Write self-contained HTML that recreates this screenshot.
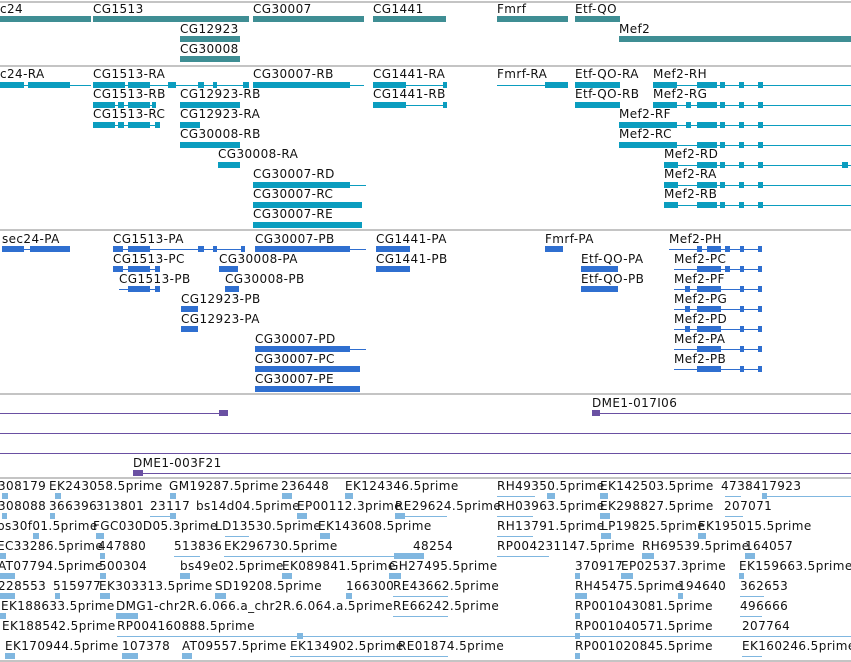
<!DOCTYPE html>
<html><head><meta charset="utf-8"><style>
body{margin:0;width:851px;height:662px;background:#fff;position:relative;overflow:hidden}
.t{position:absolute;font:12px "DejaVu Sans","Liberation Sans",sans-serif;letter-spacing:0.4px;white-space:nowrap;color:#111;line-height:14px}
.b{position:absolute;height:6px}
.l{position:absolute;height:1px}
.s{position:absolute;left:0;width:851px;height:2px;background:#c4c4c4}
.g{background:#3f8e94}
.r{background:#0b9dbf}
.p{background:#2f6fd0}
.d{background:#6a50a2}
.e{background:#80b7e0}
</style></head><body>
<div class="s" style="top:1px"></div>
<div class="s" style="top:65px"></div>
<div class="s" style="top:229px"></div>
<div class="s" style="top:393px"></div>
<div class="s" style="top:477px"></div>
<div class="s" style="top:660px"></div>

<!-- genes -->
<div class="t" style="left:0;top:2px">c24</div>
<div class="t" style="left:93px;top:2px">CG1513</div>
<div class="t" style="left:253px;top:2px">CG30007</div>
<div class="t" style="left:373px;top:2px">CG1441</div>
<div class="t" style="left:497px;top:2px">Fmrf</div>
<div class="t" style="left:575px;top:2px">Etf-QO</div>
<div class="b g" style="left:0;top:16px;width:91px"></div>
<div class="b g" style="left:93px;top:16px;width:156px"></div>
<div class="b g" style="left:253px;top:16px;width:111px"></div>
<div class="b g" style="left:373px;top:16px;width:73px"></div>
<div class="b g" style="left:497px;top:16px;width:71px"></div>
<div class="b g" style="left:575px;top:16px;width:45px"></div>
<div class="t" style="left:180px;top:22px">CG12923</div>
<div class="t" style="left:619px;top:22px">Mef2</div>
<div class="b g" style="left:180px;top:36px;width:60px"></div>
<div class="b g" style="left:619px;top:36px;width:232px"></div>
<div class="t" style="left:180px;top:42px">CG30008</div>
<div class="b g" style="left:180px;top:56px;width:60px"></div>

<!-- transcripts -->
<div class="t" style="left:0;top:67px">c24-RA</div>
<div class="t" style="left:93px;top:67px">CG1513-RA</div>
<div class="t" style="left:253px;top:67px">CG30007-RB</div>
<div class="t" style="left:373px;top:67px">CG1441-RA</div>
<div class="t" style="left:497px;top:67px">Fmrf-RA</div>
<div class="t" style="left:575px;top:67px">Etf-QO-RA</div>
<div class="t" style="left:653px;top:67px">Mef2-RH</div>
<div class="l r" style="left:0;top:85px;width:91px"></div>
<div class="b r" style="left:0;top:82px;width:24px"></div><div class="b r" style="left:28px;top:82px;width:42px"></div>
<div class="l r" style="left:93px;top:85px;width:156px"></div>
<div class="b r" style="left:93px;top:82px;width:32px"></div><div class="b r" style="left:128px;top:82px;width:22px"></div><div class="b r" style="left:168px;top:82px;width:8px"></div><div class="b r" style="left:198px;top:82px;width:6px"></div><div class="b r" style="left:213px;top:82px;width:4px"></div><div class="b r" style="left:243px;top:82px;width:6px"></div>
<div class="l r" style="left:253px;top:85px;width:111px"></div><div class="b r" style="left:253px;top:82px;width:97px"></div>
<div class="l r" style="left:373px;top:85px;width:74px"></div><div class="b r" style="left:373px;top:82px;width:33px"></div><div class="b r" style="left:443px;top:82px;width:4px"></div>
<div class="l r" style="left:497px;top:85px;width:48px"></div><div class="b r" style="left:545px;top:82px;width:23px"></div>
<div class="b r" style="left:575px;top:82px;width:45px"></div>
<div class="l r" style="left:653px;top:85px;width:198px"></div><div class="b r" style="left:653px;top:82px;width:24px"></div><div class="b r" style="left:697px;top:82px;width:20px"></div><div class="b r" style="left:720px;top:82px;width:5px"></div><div class="b r" style="left:739px;top:82px;width:5px"></div><div class="b r" style="left:758px;top:82px;width:5px"></div>

<div class="t" style="left:93px;top:87px">CG1513-RB</div>
<div class="t" style="left:180px;top:87px">CG12923-RB</div>
<div class="t" style="left:373px;top:87px">CG1441-RB</div>
<div class="t" style="left:575px;top:87px">Etf-QO-RB</div>
<div class="t" style="left:653px;top:87px">Mef2-RG</div>
<div class="l r" style="left:93px;top:105px;width:62px"></div><div class="b r" style="left:93px;top:102px;width:22px"></div><div class="b r" style="left:118px;top:102px;width:6px"></div><div class="b r" style="left:128px;top:102px;width:22px"></div><div class="b r" style="left:152px;top:102px;width:4px"></div>
<div class="b r" style="left:180px;top:102px;width:60px"></div>
<div class="l r" style="left:373px;top:105px;width:74px"></div><div class="b r" style="left:373px;top:102px;width:33px"></div><div class="b r" style="left:443px;top:102px;width:4px"></div>
<div class="b r" style="left:575px;top:102px;width:45px"></div>
<div class="l r" style="left:653px;top:105px;width:198px"></div><div class="b r" style="left:653px;top:102px;width:24px"></div><div class="b r" style="left:686px;top:102px;width:5px"></div><div class="b r" style="left:697px;top:102px;width:20px"></div><div class="b r" style="left:720px;top:102px;width:5px"></div><div class="b r" style="left:739px;top:102px;width:5px"></div><div class="b r" style="left:758px;top:102px;width:5px"></div>

<div class="t" style="left:93px;top:107px">CG1513-RC</div>
<div class="t" style="left:180px;top:107px">CG12923-RA</div>
<div class="t" style="left:619px;top:107px">Mef2-RF</div>
<div class="l r" style="left:93px;top:125px;width:67px"></div><div class="b r" style="left:93px;top:122px;width:22px"></div><div class="b r" style="left:118px;top:122px;width:6px"></div><div class="b r" style="left:128px;top:122px;width:22px"></div><div class="b r" style="left:155px;top:122px;width:5px"></div>
<div class="b r" style="left:180px;top:122px;width:20px"></div>
<div class="l r" style="left:619px;top:125px;width:232px"></div><div class="b r" style="left:619px;top:122px;width:58px"></div><div class="b r" style="left:686px;top:122px;width:5px"></div><div class="b r" style="left:697px;top:122px;width:20px"></div><div class="b r" style="left:720px;top:122px;width:5px"></div><div class="b r" style="left:739px;top:122px;width:5px"></div><div class="b r" style="left:758px;top:122px;width:5px"></div>

<div class="t" style="left:180px;top:127px">CG30008-RB</div>
<div class="t" style="left:619px;top:127px">Mef2-RC</div>
<div class="b r" style="left:180px;top:142px;width:60px"></div>
<div class="l r" style="left:619px;top:145px;width:232px"></div><div class="b r" style="left:619px;top:142px;width:58px"></div><div class="b r" style="left:697px;top:142px;width:20px"></div><div class="b r" style="left:720px;top:142px;width:5px"></div><div class="b r" style="left:739px;top:142px;width:5px"></div><div class="b r" style="left:758px;top:142px;width:5px"></div>

<div class="t" style="left:218px;top:147px">CG30008-RA</div>
<div class="t" style="left:664px;top:147px">Mef2-RD</div>
<div class="b r" style="left:218px;top:162px;width:22px"></div>
<div class="l r" style="left:664px;top:165px;width:187px"></div><div class="b r" style="left:664px;top:162px;width:14px"></div><div class="b r" style="left:697px;top:162px;width:20px"></div><div class="b r" style="left:720px;top:162px;width:5px"></div><div class="b r" style="left:739px;top:162px;width:5px"></div><div class="b r" style="left:758px;top:162px;width:5px"></div><div class="b r" style="left:842px;top:162px;width:6px"></div>

<div class="t" style="left:253px;top:167px">CG30007-RD</div>
<div class="t" style="left:664px;top:167px">Mef2-RA</div>
<div class="l r" style="left:253px;top:185px;width:113px"></div><div class="b r" style="left:253px;top:182px;width:97px"></div>
<div class="l r" style="left:664px;top:185px;width:187px"></div><div class="b r" style="left:664px;top:182px;width:14px"></div><div class="b r" style="left:697px;top:182px;width:20px"></div><div class="b r" style="left:720px;top:182px;width:5px"></div><div class="b r" style="left:739px;top:182px;width:5px"></div><div class="b r" style="left:758px;top:182px;width:5px"></div>

<div class="t" style="left:253px;top:187px">CG30007-RC</div>
<div class="t" style="left:664px;top:187px">Mef2-RB</div>
<div class="b r" style="left:253px;top:202px;width:109px"></div>
<div class="l r" style="left:664px;top:205px;width:187px"></div><div class="b r" style="left:664px;top:202px;width:14px"></div><div class="b r" style="left:697px;top:202px;width:20px"></div><div class="b r" style="left:720px;top:202px;width:5px"></div><div class="b r" style="left:739px;top:202px;width:5px"></div><div class="b r" style="left:758px;top:202px;width:5px"></div>

<div class="t" style="left:253px;top:207px">CG30007-RE</div>
<div class="b r" style="left:253px;top:222px;width:109px"></div>

<!-- proteins -->
<div class="t" style="left:2px;top:232px">sec24-PA</div>
<div class="t" style="left:113px;top:232px">CG1513-PA</div>
<div class="t" style="left:255px;top:232px">CG30007-PB</div>
<div class="t" style="left:376px;top:232px">CG1441-PA</div>
<div class="t" style="left:545px;top:232px">Fmrf-PA</div>
<div class="t" style="left:669px;top:232px">Mef2-PH</div>
<div class="l p" style="left:2px;top:249px;width:68px"></div><div class="b p" style="left:2px;top:246px;width:22px"></div><div class="b p" style="left:30px;top:246px;width:40px"></div>
<div class="l p" style="left:113px;top:249px;width:132px"></div><div class="b p" style="left:113px;top:246px;width:10px"></div><div class="b p" style="left:128px;top:246px;width:22px"></div><div class="b p" style="left:198px;top:246px;width:6px"></div><div class="b p" style="left:213px;top:246px;width:4px"></div><div class="b p" style="left:241px;top:246px;width:4px"></div>
<div class="l p" style="left:255px;top:249px;width:111px"></div><div class="b p" style="left:255px;top:246px;width:95px"></div>
<div class="b p" style="left:376px;top:246px;width:34px"></div>
<div class="b p" style="left:545px;top:246px;width:18px"></div>
<div class="l p" style="left:669px;top:249px;width:93px"></div><div class="b p" style="left:697px;top:246px;width:5px"></div><div class="b p" style="left:707px;top:246px;width:14px"></div><div class="b p" style="left:725px;top:246px;width:5px"></div><div class="b p" style="left:740px;top:246px;width:4px"></div><div class="b p" style="left:758px;top:246px;width:4px"></div>

<div class="t" style="left:113px;top:252px">CG1513-PC</div>
<div class="t" style="left:219px;top:252px">CG30008-PA</div>
<div class="t" style="left:376px;top:252px">CG1441-PB</div>
<div class="t" style="left:581px;top:252px">Etf-QO-PA</div>
<div class="t" style="left:674px;top:252px">Mef2-PC</div>
<div class="l p" style="left:113px;top:269px;width:47px"></div><div class="b p" style="left:113px;top:266px;width:10px"></div><div class="b p" style="left:128px;top:266px;width:22px"></div><div class="b p" style="left:155px;top:266px;width:5px"></div>
<div class="b p" style="left:219px;top:266px;width:19px"></div>
<div class="b p" style="left:376px;top:266px;width:34px"></div>
<div class="b p" style="left:581px;top:266px;width:37px"></div>
<div class="l p" style="left:674px;top:269px;width:88px"></div><div class="b p" style="left:697px;top:266px;width:24px"></div><div class="b p" style="left:725px;top:266px;width:5px"></div><div class="b p" style="left:740px;top:266px;width:4px"></div><div class="b p" style="left:758px;top:266px;width:4px"></div>

<div class="t" style="left:119px;top:272px">CG1513-PB</div>
<div class="t" style="left:225px;top:272px">CG30008-PB</div>
<div class="t" style="left:581px;top:272px">Etf-QO-PB</div>
<div class="t" style="left:674px;top:272px">Mef2-PF</div>
<div class="l p" style="left:119px;top:289px;width:41px"></div><div class="b p" style="left:128px;top:286px;width:22px"></div><div class="b p" style="left:155px;top:286px;width:5px"></div>
<div class="b p" style="left:225px;top:286px;width:14px"></div>
<div class="b p" style="left:581px;top:286px;width:37px"></div>
<div class="l p" style="left:674px;top:289px;width:88px"></div><div class="b p" style="left:685px;top:286px;width:5px"></div><div class="b p" style="left:697px;top:286px;width:24px"></div><div class="b p" style="left:740px;top:286px;width:4px"></div><div class="b p" style="left:758px;top:286px;width:4px"></div>

<div class="t" style="left:181px;top:292px">CG12923-PB</div>
<div class="t" style="left:674px;top:292px">Mef2-PG</div>
<div class="b p" style="left:181px;top:306px;width:17px"></div>
<div class="l p" style="left:674px;top:309px;width:88px"></div><div class="b p" style="left:685px;top:306px;width:5px"></div><div class="b p" style="left:697px;top:306px;width:24px"></div><div class="b p" style="left:740px;top:306px;width:4px"></div><div class="b p" style="left:758px;top:306px;width:4px"></div>

<div class="t" style="left:181px;top:312px">CG12923-PA</div>
<div class="t" style="left:674px;top:312px">Mef2-PD</div>
<div class="b p" style="left:181px;top:326px;width:17px"></div>
<div class="l p" style="left:674px;top:329px;width:88px"></div><div class="b p" style="left:685px;top:326px;width:5px"></div><div class="b p" style="left:697px;top:326px;width:24px"></div><div class="b p" style="left:740px;top:326px;width:4px"></div><div class="b p" style="left:758px;top:326px;width:4px"></div>

<div class="t" style="left:255px;top:332px">CG30007-PD</div>
<div class="t" style="left:674px;top:332px">Mef2-PA</div>
<div class="l p" style="left:255px;top:349px;width:111px"></div><div class="b p" style="left:255px;top:346px;width:95px"></div>
<div class="l p" style="left:674px;top:349px;width:88px"></div><div class="b p" style="left:697px;top:346px;width:24px"></div><div class="b p" style="left:740px;top:346px;width:4px"></div><div class="b p" style="left:758px;top:346px;width:4px"></div>

<div class="t" style="left:255px;top:352px">CG30007-PC</div>
<div class="t" style="left:674px;top:352px">Mef2-PB</div>
<div class="b p" style="left:255px;top:366px;width:105px"></div>
<div class="l p" style="left:674px;top:369px;width:88px"></div><div class="b p" style="left:697px;top:366px;width:24px"></div><div class="b p" style="left:740px;top:366px;width:4px"></div><div class="b p" style="left:758px;top:366px;width:4px"></div>

<div class="t" style="left:255px;top:372px">CG30007-PE</div>
<div class="b p" style="left:255px;top:386px;width:105px"></div>

<!-- DME -->
<div class="l d" style="left:0;top:413px;width:228px"></div><div class="b d" style="left:219px;top:410px;width:9px"></div>
<div class="t" style="left:592px;top:396px">DME1-017I06</div>
<div class="l d" style="left:592px;top:413px;width:259px"></div><div class="b d" style="left:592px;top:410px;width:8px"></div>
<div class="l d" style="left:0;top:433px;width:851px"></div>
<div class="l d" style="left:0;top:453px;width:851px"></div>
<div class="t" style="left:133px;top:456px">DME1-003F21</div>
<div class="l d" style="left:133px;top:473px;width:718px"></div><div class="b d" style="left:133px;top:470px;width:10px"></div>

<!-- ESTs -->
<div class="t" style="left:-2px;top:479px">308179</div><div class="t" style="left:49px;top:479px">EK243058.5prime</div><div class="t" style="left:169px;top:479px">GM19287.5prime</div><div class="t" style="left:281px;top:479px">236448</div><div class="t" style="left:345px;top:479px">EK124346.5prime</div><div class="t" style="left:497px;top:479px">RH49350.5prime</div><div class="t" style="left:600px;top:479px">EK142503.5prime</div><div class="t" style="left:721px;top:479px">4738417923</div>
<div class="t" style="left:-2px;top:499px">308088</div><div class="t" style="left:49px;top:499px">366396</div><div class="t" style="left:96px;top:499px">313801</div><div class="t" style="left:150px;top:499px">23117</div><div class="t" style="left:196px;top:499px">bs14d04.5prime</div><div class="t" style="left:297px;top:499px">EP00112.3prime</div><div class="t" style="left:395px;top:499px">RE29624.5prime</div><div class="t" style="left:497px;top:499px">RH03963.5prime</div><div class="t" style="left:600px;top:499px">EK298827.5prime</div><div class="t" style="left:724px;top:499px">207071</div>
<div class="t" style="left:-3px;top:519px">bs30f01.5prime</div><div class="t" style="left:93px;top:519px">FGC030D05.3prime</div><div class="t" style="left:215px;top:519px">LD13530.5prime</div><div class="t" style="left:318px;top:519px">EK143608.5prime</div><div class="t" style="left:497px;top:519px">RH13791.5prime</div><div class="t" style="left:601px;top:519px">LP19825.5prime</div><div class="t" style="left:698px;top:519px">EK195015.5prime</div>
<div class="t" style="left:-3px;top:539px">EC33286.5prime</div><div class="t" style="left:98px;top:539px">447880</div><div class="t" style="left:174px;top:539px">513836</div><div class="t" style="left:224px;top:539px">EK296730.5prime</div><div class="t" style="left:413px;top:539px">48254</div><div class="t" style="left:497px;top:539px">RP004231147.5prime</div><div class="t" style="left:642px;top:539px">RH69539.5prime</div><div class="t" style="left:745px;top:539px">164057</div>
<div class="t" style="left:-2px;top:559px">AT07794.5prime</div><div class="t" style="left:99px;top:559px">500304</div><div class="t" style="left:180px;top:559px">bs49e02.5prime</div><div class="t" style="left:282px;top:559px">EK089841.5prime</div><div class="t" style="left:389px;top:559px">GH27495.5prime</div><div class="t" style="left:575px;top:559px">370917</div><div class="t" style="left:621px;top:559px">EP02537.3prime</div><div class="t" style="left:739px;top:559px">EK159663.5prime</div>
<div class="t" style="left:-2px;top:579px">228553</div><div class="t" style="left:53px;top:579px">515977</div><div class="t" style="left:99px;top:579px">EK303313.5prime</div><div class="t" style="left:215px;top:579px">SD19208.5prime</div><div class="t" style="left:346px;top:579px">166300</div><div class="t" style="left:393px;top:579px">RE43662.5prime</div><div class="t" style="left:575px;top:579px">RH45475.5prime</div><div class="t" style="left:678px;top:579px">194640</div><div class="t" style="left:740px;top:579px">362653</div>
<div class="t" style="left:1px;top:599px">EK188633.5prime</div><div class="t" style="left:116px;top:599px">DMG1-chr2R.6.066.a_chr2R.6.064.a.5prime</div><div class="t" style="left:393px;top:599px">RE66242.5prime</div><div class="t" style="left:575px;top:599px">RP001043081.5prime</div><div class="t" style="left:740px;top:599px">496666</div>
<div class="t" style="left:2px;top:619px">EK188542.5prime</div><div class="t" style="left:117px;top:619px">RP004160888.5prime</div><div class="t" style="left:575px;top:619px">RP001040571.5prime</div><div class="t" style="left:742px;top:619px">207764</div>
<div class="t" style="left:5px;top:639px">EK170944.5prime</div><div class="t" style="left:122px;top:639px">107378</div><div class="t" style="left:182px;top:639px">AT09557.5prime</div><div class="t" style="left:290px;top:639px">EK134902.5prime</div><div class="t" style="left:398px;top:639px">RE01874.5prime</div><div class="t" style="left:575px;top:639px">RP001020845.5prime</div><div class="t" style="left:742px;top:639px">EK160246.5prime</div>

<!-- EST features -->
<div class="b e" style="left:2px;top:493px;width:6px"></div><div class="b e" style="left:55px;top:493px;width:6px"></div><div class="b e" style="left:170px;top:493px;width:6px"></div><div class="b e" style="left:282px;top:493px;width:10px"></div><div class="b e" style="left:345px;top:493px;width:8px"></div><div class="l e" style="left:497px;top:496px;width:38px"></div><div class="b e" style="left:547px;top:493px;width:8px"></div><div class="b e" style="left:600px;top:493px;width:8px"></div><div class="l e" style="left:725px;top:496px;width:16px"></div><div class="l e" style="left:762px;top:496px;width:89px"></div><div class="b e" style="left:762px;top:493px;width:5px"></div>
<div class="b e" style="left:2px;top:513px;width:5px"></div><div class="b e" style="left:50px;top:513px;width:5px"></div><div class="l e" style="left:150px;top:516px;width:25px"></div><div class="b e" style="left:170px;top:513px;width:6px"></div><div class="b e" style="left:297px;top:513px;width:10px"></div><div class="l e" style="left:395px;top:516px;width:52px"></div><div class="b e" style="left:395px;top:513px;width:10px"></div><div class="l e" style="left:497px;top:516px;width:36px"></div><div class="b e" style="left:600px;top:513px;width:10px"></div><div class="l e" style="left:725px;top:516px;width:18px"></div>
<div class="b e" style="left:33px;top:533px;width:6px"></div><div class="b e" style="left:96px;top:533px;width:8px"></div><div class="l e" style="left:225px;top:536px;width:24px"></div><div class="b e" style="left:320px;top:533px;width:10px"></div><div class="l e" style="left:497px;top:536px;width:36px"></div><div class="b e" style="left:601px;top:533px;width:10px"></div><div class="b e" style="left:698px;top:533px;width:8px"></div>
<div class="b e" style="left:0px;top:553px;width:6px"></div><div class="b e" style="left:100px;top:553px;width:5px"></div><div class="l e" style="left:174px;top:556px;width:26px"></div><div class="l e" style="left:224px;top:556px;width:200px"></div><div class="b e" style="left:394px;top:553px;width:30px"></div><div class="l e" style="left:497px;top:556px;width:52px"></div><div class="b e" style="left:642px;top:553px;width:12px"></div><div class="b e" style="left:745px;top:553px;width:10px"></div>
<div class="b e" style="left:0px;top:573px;width:15px"></div><div class="b e" style="left:100px;top:573px;width:6px"></div><div class="b e" style="left:180px;top:573px;width:10px"></div><div class="b e" style="left:282px;top:573px;width:10px"></div><div class="b e" style="left:389px;top:573px;width:12px"></div><div class="b e" style="left:575px;top:573px;width:5px"></div><div class="b e" style="left:621px;top:573px;width:12px"></div><div class="b e" style="left:739px;top:573px;width:5px"></div>
<div class="b e" style="left:0px;top:593px;width:15px"></div><div class="b e" style="left:55px;top:593px;width:5px"></div><div class="b e" style="left:100px;top:593px;width:10px"></div><div class="b e" style="left:215px;top:593px;width:11px"></div><div class="b e" style="left:346px;top:593px;width:6px"></div><div class="l e" style="left:393px;top:596px;width:55px"></div><div class="b e" style="left:575px;top:593px;width:12px"></div><div class="b e" style="left:678px;top:593px;width:5px"></div><div class="l e" style="left:740px;top:596px;width:24px"></div>
<div class="b e" style="left:0px;top:613px;width:6px"></div><div class="b e" style="left:116px;top:613px;width:22px"></div><div class="l e" style="left:393px;top:616px;width:55px"></div><div class="b e" style="left:575px;top:613px;width:5px"></div><div class="l e" style="left:740px;top:616px;width:22px"></div>
<div class="l e" style="left:117px;top:636px;width:734px"></div><div class="b e" style="left:297px;top:633px;width:6px"></div><div class="b e" style="left:575px;top:633px;width:5px"></div><div class="l e" style="left:742px;top:636px;width:18px"></div>
<div class="b e" style="left:5px;top:653px;width:10px"></div><div class="b e" style="left:122px;top:653px;width:16px"></div><div class="b e" style="left:182px;top:653px;width:10px"></div><div class="l e" style="left:290px;top:656px;width:158px"></div><div class="b e" style="left:575px;top:653px;width:5px"></div><div class="l e" style="left:742px;top:656px;width:20px"></div>
</body></html>
